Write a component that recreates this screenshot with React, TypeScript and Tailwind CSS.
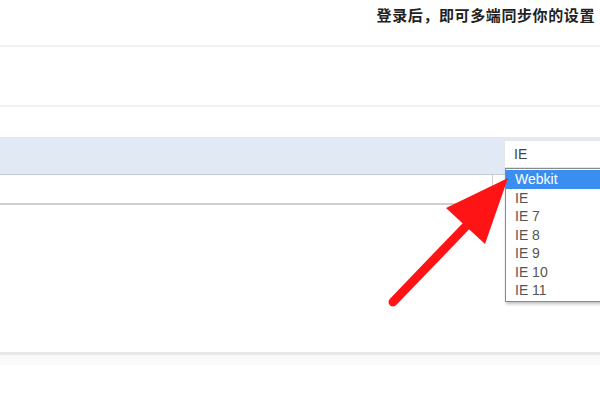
import React from 'react';

const options = ['Webkit', 'IE', 'IE 7', 'IE 8', 'IE 9', 'IE 10', 'IE 11'];

export default function App() {
    return (
        <div className="relative w-[600px] h-[400px] overflow-hidden bg-white font-['Liberation_Sans',Arial,sans-serif]">
            {/* header */}
            <div className="h-[45px] flex justify-end pr-[5px] pt-[5px]">
                <span className="text-[15px] tracking-[0.6px] font-bold text-[#222] font-['Noto_Sans_CJK_SC',sans-serif] leading-[20px]">
                    登录后，即可多端同步你的设置
                </span>
            </div>
            <div className="h-[2px] bg-[#f1f1f1]" />
            <div className="h-[58px]" />
            <div className="h-[2px] bg-[#f1f1f1]" />
            <div className="h-[30px]" />

            {/* blue band */}
            <div className="h-[38px] bg-[#e1e9f4] border-b border-[#c9ccd2]" />

            {/* input row */}
            <div className="h-[30px] w-[493px] bg-white border-b-2 border-r border-[#cfcfcf] rounded-br-[2px]" />

            <div className="h-[147px]" />
            <div className="h-[3px] bg-[#e8e8e8]" />
            <div className="h-[10px] bg-[#fafafa]" />

            {/* select box */}
            <div className="absolute left-[504px] top-[140px] w-[100px] h-[28px] bg-white border border-[#e3e6ea] flex items-center pl-[9px] text-[14px] text-[#444]">
                IE
            </div>

            {/* list box */}
            <div className="absolute left-[505px] top-[168px] w-[100px] bg-white border border-[#8a8a8a] shadow-[1px_2px_3px_rgba(0,0,0,0.25)] py-[1px]">
                {options.map((o, i) => (
                    <div
                        key={o}
                        className={`h-[18.5px] flex items-center pl-[9px] text-[14px] leading-none ${
                            i === 0 ? 'bg-[#3a8ef0] text-white' : 'text-[#555]'
                        }`}
                    >
                        {o}
                    </div>
                ))}
            </div>

            {/* red arrow */}
            <svg className="absolute left-0 top-0 pointer-events-none" width="600" height="400">
                <line x1="393" y1="302" x2="470" y2="222" stroke="#fe1414" strokeWidth="9" strokeLinecap="round" />
                <polygon points="508,178 446,208 485,244" fill="#fe1414" />
            </svg>
        </div>
    );
}
